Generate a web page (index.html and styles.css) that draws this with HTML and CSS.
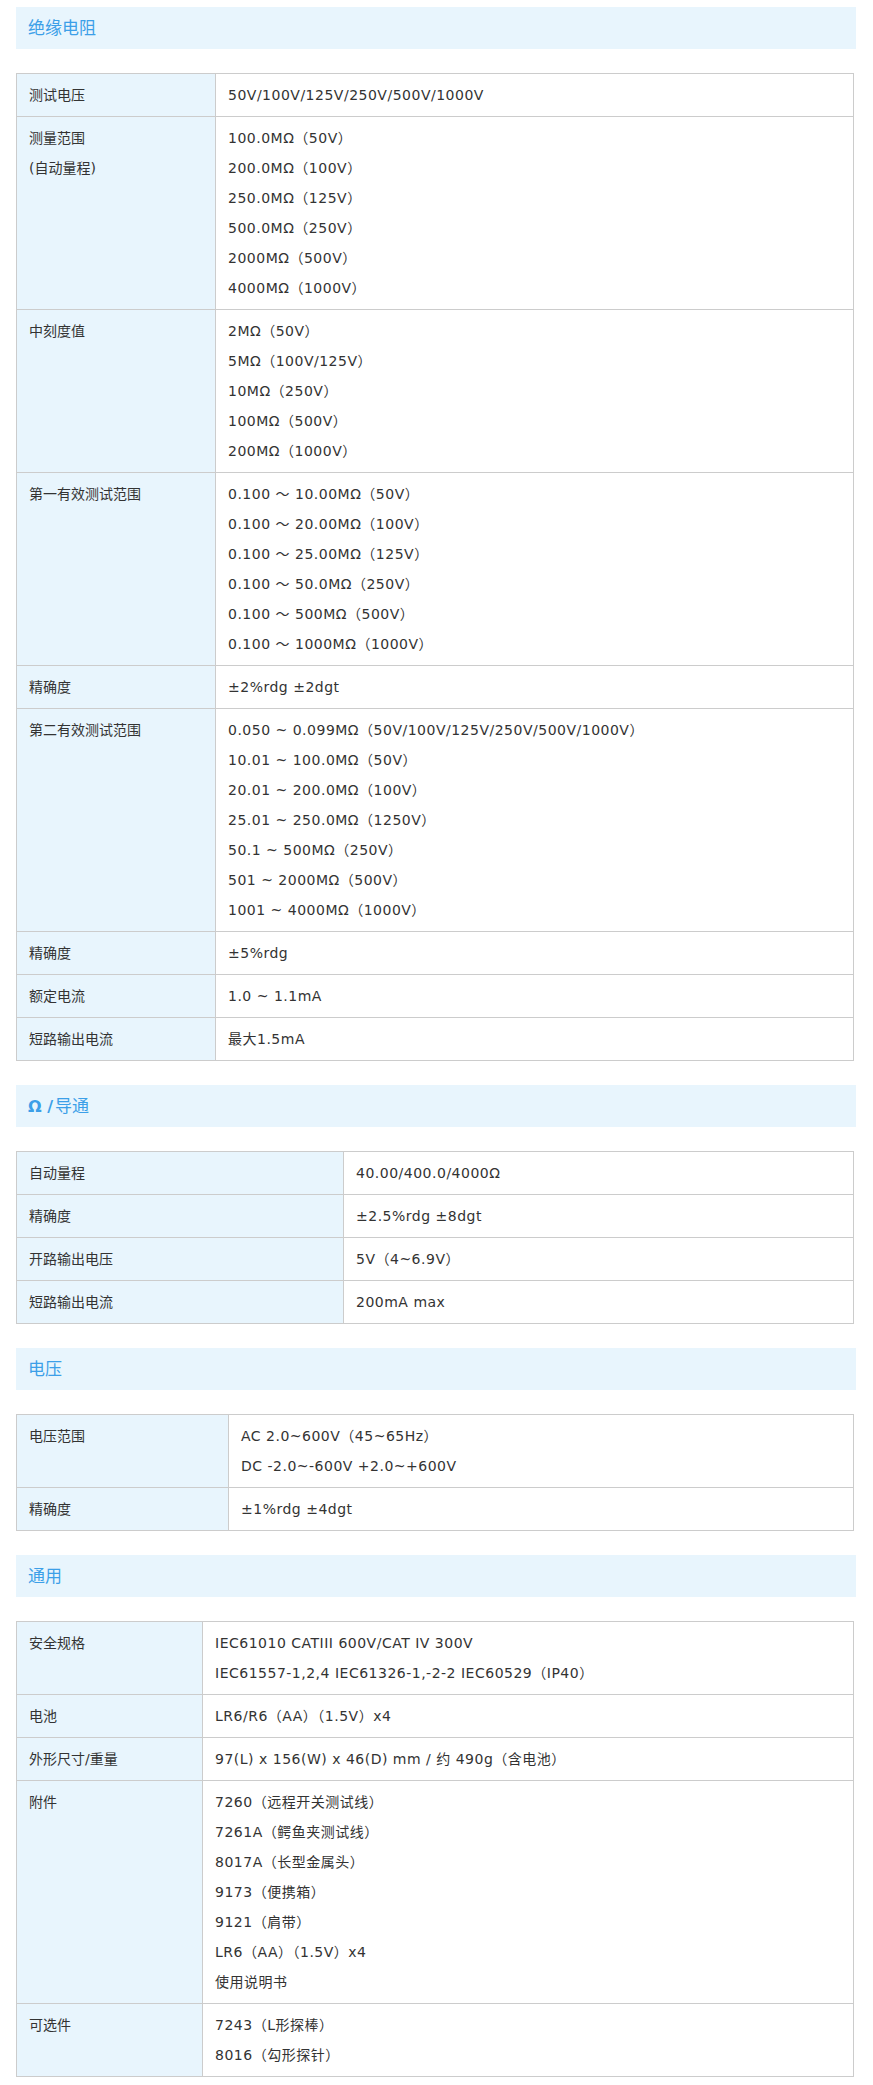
FILE: index.html
```html
<!DOCTYPE html>
<html lang="zh-CN">
<head>
<meta charset="utf-8">
<title>规格</title>
<link rel="stylesheet" href="styles.css">
</head>
<body>
<div class="page">

  <section class="section">
    <h2 class="sec-title">绝缘电阻</h2>
    <div class="spec spec-ins">
      <div class="lbl">测试电压</div>
      <div class="val">50V/100V/125V/250V/500V/1000V</div>

      <div class="lbl">测量范围<br>(自动量程)</div>
      <div class="val">100.0MΩ（50V）<br>200.0MΩ（100V）<br>250.0MΩ（125V）<br>500.0MΩ（250V）<br>2000MΩ（500V）<br>4000MΩ（1000V）</div>

      <div class="lbl">中刻度值</div>
      <div class="val">2MΩ（50V）<br>5MΩ（100V/125V）<br>10MΩ（250V）<br>100MΩ（500V）<br>200MΩ（1000V）</div>

      <div class="lbl">第一有效测试范围</div>
      <div class="val">0.100 ～ 10.00MΩ（50V）<br>0.100 ～ 20.00MΩ（100V）<br>0.100 ～ 25.00MΩ（125V）<br>0.100 ～ 50.0MΩ（250V）<br>0.100 ～ 500MΩ（500V）<br>0.100 ～ 1000MΩ（1000V）</div>

      <div class="lbl">精确度</div>
      <div class="val">±2%rdg ±2dgt</div>

      <div class="lbl">第二有效测试范围</div>
      <div class="val">0.050 ~ 0.099MΩ（50V/100V/125V/250V/500V/1000V）<br>10.01 ~ 100.0MΩ（50V）<br>20.01 ~ 200.0MΩ（100V）<br>25.01 ~ 250.0MΩ（1250V）<br>50.1 ~ 500MΩ（250V）<br>501 ~ 2000MΩ（500V）<br>1001 ~ 4000MΩ（1000V）</div>

      <div class="lbl">精确度</div>
      <div class="val">±5%rdg</div>

      <div class="lbl">额定电流</div>
      <div class="val">1.0 ~ 1.1mA</div>

      <div class="lbl">短路输出电流</div>
      <div class="val">最大1.5mA</div>
    </div>
  </section>

  <section class="section">
    <h2 class="sec-title"><b class="sym">Ω /</b>导通</h2>
    <div class="spec spec-ohm">
      <div class="lbl">自动量程</div>
      <div class="val">40.00/400.0/4000Ω</div>

      <div class="lbl">精确度</div>
      <div class="val">±2.5%rdg ±8dgt</div>

      <div class="lbl">开路输出电压</div>
      <div class="val">5V（4~6.9V）</div>

      <div class="lbl">短路输出电流</div>
      <div class="val">200mA max</div>
    </div>
  </section>

  <section class="section">
    <h2 class="sec-title">电压</h2>
    <div class="spec spec-volt">
      <div class="lbl">电压范围</div>
      <div class="val">AC 2.0~600V（45~65Hz）<br>DC -2.0~-600V +2.0~+600V</div>

      <div class="lbl">精确度</div>
      <div class="val">±1%rdg ±4dgt</div>
    </div>
  </section>

  <section class="section">
    <h2 class="sec-title">通用</h2>
    <div class="spec spec-gen">
      <div class="lbl">安全规格</div>
      <div class="val">IEC61010 CATIII 600V/CAT IV 300V<br>IEC61557-1,2,4 IEC61326-1,-2-2 IEC60529（IP40）</div>

      <div class="lbl">电池</div>
      <div class="val">LR6/R6（AA）（1.5V）x4</div>

      <div class="lbl">外形尺寸/重量</div>
      <div class="val">97(L) x 156(W) x 46(D) mm / 约 490g（含电池）</div>

      <div class="lbl">附件</div>
      <div class="val">7260（远程开关测试线）<br>7261A（鳄鱼夹测试线）<br>8017A（长型金属头）<br>9173（便携箱）<br>9121（肩带）<br>LR6（AA）（1.5V）x4<br>使用说明书</div>

      <div class="lbl">可选件</div>
      <div class="val">7243（L形探棒）<br>8016（勾形探针）</div>
    </div>
  </section>

</div>
</body>
</html>
```

FILE: styles.css
```css
html, body {
  margin: 0;
  padding: 0;
  background: #ffffff;
}

.page {
  padding: 7px 17px 8px 16px;
  font-family: "DejaVu Sans", "Noto Sans CJK SC", sans-serif;
  font-size: 14px;
  color: #333333;
}

.section {
  margin-bottom: 24px;
}

.section:last-child {
  margin-bottom: 0;
}

.sec-title {
  margin: 0 0 24px 0;
  height: 42px;
  line-height: 42px;
  padding-left: 12px;
  background: #e8f5fd;
  color: #3c9fe8;
  font-size: 17px;
  font-weight: normal;
  font-family: "DejaVu Sans", "Noto Sans CJK SC", sans-serif;
}

.sym {
  font-weight: bold;
  font-size: 16px;
  margin-right: 2px;
}

.spec {
  display: grid;
  margin-right: 2px;
  border-top: 1px solid #cccccc;
  border-left: 1px solid #cccccc;
}

.spec-ins  { grid-template-columns: 199px 1fr; }
.spec-ohm  { grid-template-columns: 327px 1fr; }
.spec-volt { grid-template-columns: 212px 1fr; }
.spec-gen  { grid-template-columns: 186px 1fr; }

.lbl, .val {
  padding: 6px 12px;
  line-height: 30px;
  border-right: 1px solid #cccccc;
  border-bottom: 1px solid #cccccc;
}

.lbl {
  background: #e8f5fd;
  font-size: 14px;
}

.val {
  background: #ffffff;
  letter-spacing: 0.5px;
}
```
